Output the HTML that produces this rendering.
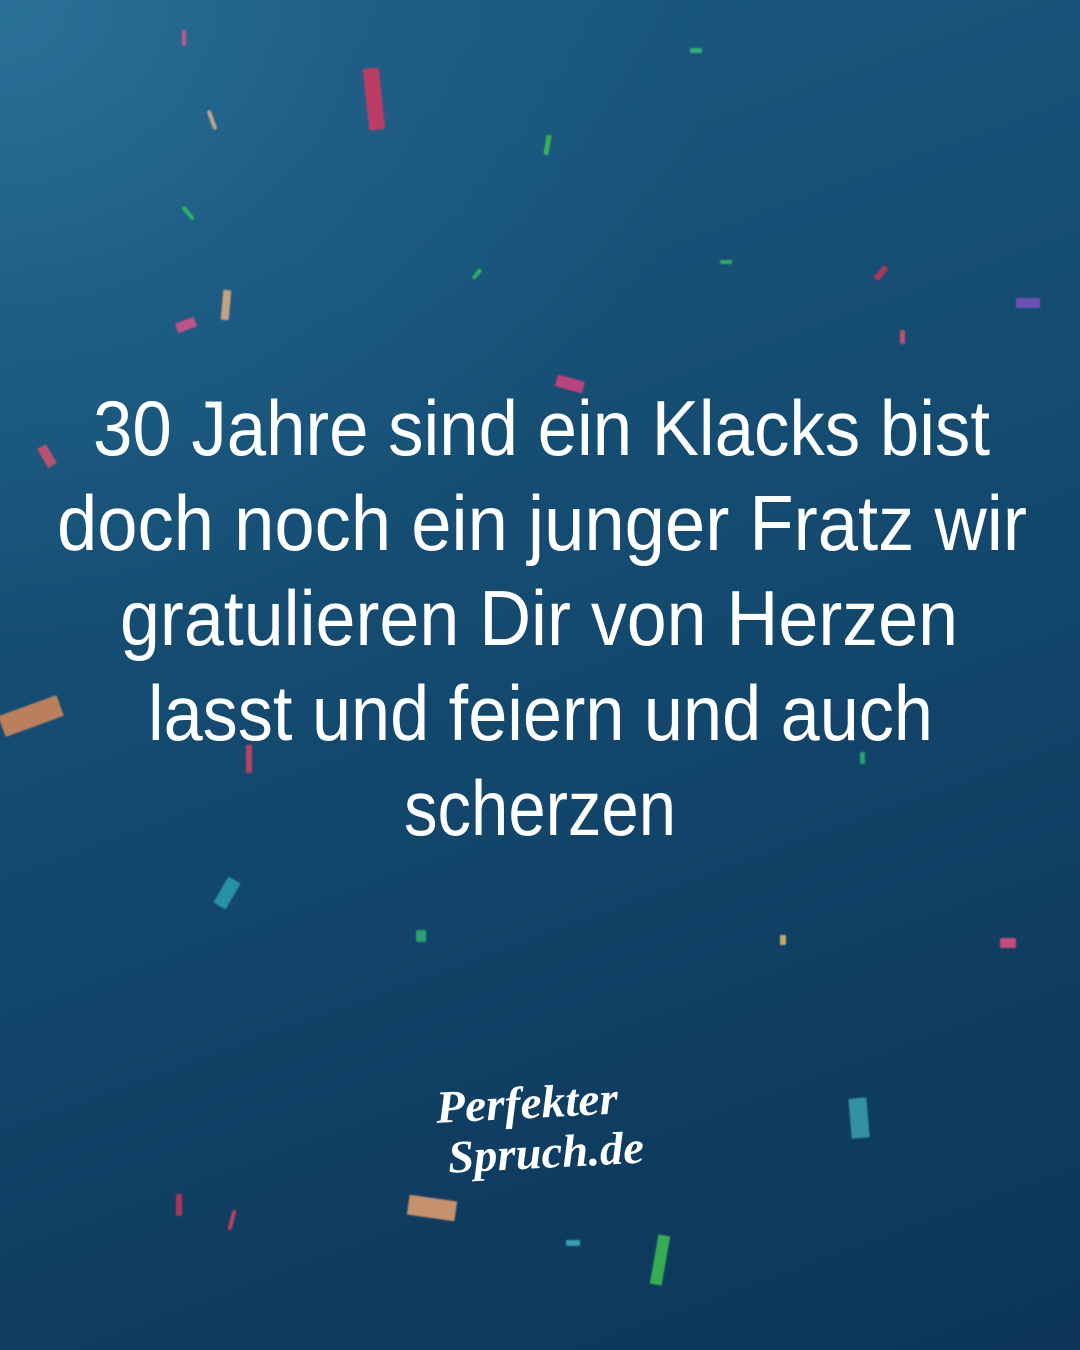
<!DOCTYPE html>
<html><head><meta charset="utf-8">
<style>
html,body{margin:0;padding:0}
body{width:1080px;height:1350px;overflow:hidden;position:relative;
background:radial-gradient(ellipse 900px 800px at 0% 0%,#2a7198 0%,rgba(34,100,140,0.6) 40%,rgba(20,70,110,0) 80%),linear-gradient(160deg,#1b5a80 0%,#144b70 45%,#0f3e62 75%,#0d3658 100%);}
.c{position:absolute;border-radius:1px;opacity:.85;filter:blur(0.8px)}
svg{position:absolute;left:0;top:0}
</style></head><body>
<div class="c" style="left:366px;top:68px;width:16px;height:62px;background:#d8385f;transform:rotate(-6deg)"></div>
<div class="c" style="left:0px;top:705px;width:62px;height:22px;background:#d88858;transform:rotate(-20deg)"></div>
<div class="c" style="left:408px;top:1198px;width:48px;height:20px;background:#e8a070;transform:rotate(8deg)"></div>
<div class="c" style="left:654px;top:1235px;width:12px;height:50px;background:#40c050;transform:rotate(10deg)"></div>
<div class="c" style="left:850px;top:1098px;width:18px;height:40px;background:#3aa0b0;transform:rotate(-5deg)"></div>
<div class="c" style="left:220px;top:878px;width:14px;height:30px;background:#2aa0b0;transform:rotate(30deg)"></div>
<div class="c" style="left:176px;top:320px;width:20px;height:10px;background:#e0508a;transform:rotate(-20deg)"></div>
<div class="c" style="left:222px;top:290px;width:8px;height:30px;background:#e0b080;transform:rotate(5deg)"></div>
<div class="c" style="left:556px;top:378px;width:28px;height:12px;background:#d84080;transform:rotate(15deg)"></div>
<div class="c" style="left:42px;top:445px;width:10px;height:22px;background:#d85070;transform:rotate(-30deg)"></div>
<div class="c" style="left:1000px;top:938px;width:16px;height:10px;background:#e05080"></div>
<div class="c" style="left:1016px;top:298px;width:24px;height:10px;background:#8050c0"></div>
<div class="c" style="left:176px;top:1194px;width:6px;height:22px;background:#d03050"></div>
<div class="c" style="left:545px;top:135px;width:5px;height:20px;background:#40c050;transform:rotate(10deg)"></div>
<div class="c" style="left:246px;top:745px;width:6px;height:28px;background:#d84060"></div>
<div class="c" style="left:416px;top:930px;width:10px;height:12px;background:#30b070"></div>
<div class="c" style="left:878px;top:265px;width:6px;height:16px;background:#d03050;transform:rotate(40deg)"></div>
<div class="c" style="left:186px;top:205px;width:4px;height:16px;background:#30c060;transform:rotate(-40deg)"></div>
<div class="c" style="left:475px;top:268px;width:4px;height:12px;background:#30c060;transform:rotate(40deg)"></div>
<div class="c" style="left:690px;top:48px;width:12px;height:5px;background:#30c070"></div>
<div class="c" style="left:900px;top:330px;width:5px;height:14px;background:#e05070"></div>
<div class="c" style="left:860px;top:752px;width:5px;height:12px;background:#30b070"></div>
<div class="c" style="left:230px;top:1210px;width:4px;height:20px;background:#d84060;transform:rotate(15deg)"></div>
<div class="c" style="left:566px;top:1240px;width:14px;height:6px;background:#3ab0c0"></div>
<div class="c" style="left:210px;top:110px;width:4px;height:20px;background:#e0b080;transform:rotate(-20deg)"></div>
<div class="c" style="left:182px;top:30px;width:4px;height:16px;background:#e05090"></div>
<div class="c" style="left:780px;top:935px;width:6px;height:10px;background:#e0c060"></div>
<div class="c" style="left:720px;top:260px;width:12px;height:4px;background:#30c060"></div>
<svg width="1080" height="1350" viewBox="0 0 1080 1350">
<g fill="#fff" font-family="Liberation Sans, sans-serif" font-size="78" text-anchor="start">
<text x="93" y="455" textLength="897" lengthAdjust="spacingAndGlyphs">30 Jahre sind ein Klacks bist</text>
<text x="57" y="550" textLength="970" lengthAdjust="spacingAndGlyphs">doch noch ein junger Fratz wir</text>
<text x="120" y="645" textLength="838" lengthAdjust="spacingAndGlyphs">gratulieren Dir von Herzen</text>
<text x="148" y="740" textLength="785" lengthAdjust="spacingAndGlyphs">lasst und feiern und auch</text>
<text x="404" y="835" textLength="272" lengthAdjust="spacingAndGlyphs">scherzen</text>
</g>
<g fill="#fff" font-family="Liberation Serif, serif" font-style="italic" font-weight="bold">
<text x="436" y="1118" font-size="46" textLength="182" lengthAdjust="spacingAndGlyphs" transform="rotate(-3 530 1105)">Perfekter</text>
<text x="448" y="1168" font-size="46" textLength="196" lengthAdjust="spacingAndGlyphs" transform="rotate(-3 540 1155)">Spruch.de</text>
</g>
</svg>
</body></html>
